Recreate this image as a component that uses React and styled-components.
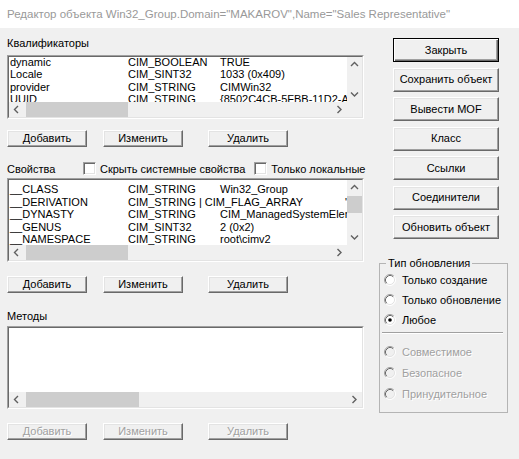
import React from 'react';
import styled, { createGlobalStyle, css } from 'styled-components';

const GlobalStyle = createGlobalStyle`
  html, body { margin: 0; padding: 0; background: #f0f0f0; }
  body { font-family: "Liberation Sans", Arial, sans-serif; font-size: 11px; color: #000; }
`;

const Window = styled.div`
  width: 519px;
  height: 459px;
  background: #f0f0f0;
  overflow: hidden;
  display: flex;
  flex-direction: column;
`;

const TitleBar = styled.div`
  flex: none;
  height: 28px;
  background: #fff;
  color: #999;
  font-size: 11.5px;
  line-height: 28px;
  padding-left: 7px;
  white-space: nowrap;
`;

const Body = styled.div`
  display: flex;
  gap: 15px;
  padding: 9px 0 0 7px;
`;

const LeftColumn = styled.div`
  width: 357px;
  display: flex;
  flex-direction: column;
`;

const SectionLabel = styled.div`
  height: 13px;
  line-height: 13px;
  margin-top: ${p => p.$mt || 0}px;
  white-space: nowrap;
`;

const ListFrame = styled.div`
  box-sizing: border-box;
  height: ${p => p.$h}px;
  margin-top: ${p => p.$mt || 0}px;
  border: 1px solid;
  border-color: #a0a0a0 #fff #fff #a0a0a0;
`;

const ListInner = styled.div`
  box-sizing: border-box;
  height: 100%;
  border: 1px solid;
  border-color: #696969 #e3e3e3 #e3e3e3 #696969;
  background: #fff;
  display: grid;
  grid-template-columns: ${p => (p.$vscroll ? '1fr 15px' : '1fr')};
  grid-template-rows: 1fr 15px;
`;

const ListContent = styled.div`
  overflow: hidden;
  min-width: 0;
  min-height: 0;
  padding-left: 1px;
`;

const Rows = styled.div`
  margin-top: ${p => p.$offset || 0}px;
`;

const ItemRow = styled.div`
  display: grid;
  grid-template-columns: 118px 92px auto;
  height: 12.5px;
  line-height: 12.5px;
  white-space: nowrap;
`;

const Cell = styled.span`
  overflow: visible;
  padding-left: ${p => p.$indent || 0}px;
`;

const VScroll = styled.div`
  background: #f0f0f0;
  display: flex;
  flex-direction: column;
  min-height: 0;
`;

const HScroll = styled.div`
  background: #f0f0f0;
  display: flex;
  align-items: stretch;
  min-width: 0;
`;

const Corner = styled.div`
  background: #f0f0f0;
`;

const ArrowBox = styled.div`
  flex: none;
  width: 15px;
  height: 15px;
  display: flex;
  align-items: center;
  justify-content: center;
`;

const Spacer = styled.div`
  flex: 1;
`;

const HThumb = styled.div`
  flex: none;
  width: ${p => p.$w}px;
  margin-left: 2px;
  background: #cdcdcd;
`;

const VThumb = styled.div`
  flex: none;
  height: ${p => p.$h}px;
  margin-top: ${p => p.$mt || 0}px;
  background: #cdcdcd;
`;

const ButtonRow = styled.div`
  display: flex;
  height: 17px;
  margin-top: ${p => p.$mt || 0}px;
`;

const raised = css`
  border: 1px solid;
  border-color: #fff #696969 #696969 #fff;
  box-shadow: inset -1px -1px 0 #a0a0a0, inset 1px 1px 0 #e3e3e3;
`;

const PushButton = styled.button`
  box-sizing: border-box;
  flex: none;
  width: ${p => p.$w}px;
  height: ${p => p.$h}px;
  margin: 0 0 0 ${p => p.$ml || 0}px;
  padding: 0;
  font-family: "Liberation Sans", Arial, sans-serif;
  font-size: 11px;
  line-height: 1;
  white-space: nowrap;
  background: #f0f0f0;
  color: ${p => (p.disabled ? '#a0a0a0' : '#000')};
  text-shadow: ${p => (p.disabled ? '1px 1px 0 #fff' : 'none')};
  ${raised}
  ${p =>
    p.$default &&
    css`
      border: 1px solid #000;
      box-shadow: inset 1px 1px 0 #fff, inset -1px -1px 0 #696969, inset -2px -2px 0 #a0a0a0;
    `}
`;

const PropsHeader = styled.div`
  display: flex;
  align-items: center;
  height: 13px;
  margin-top: ${p => p.$mt || 0}px;
  white-space: nowrap;
`;

const HeaderLabel = styled.span`
  width: 76px;
  flex: none;
`;

const CheckLabel = styled.label`
  display: flex;
  align-items: center;
  gap: 4px;
  margin-left: ${p => p.$ml || 0}px;
`;

const CheckBox = styled.span`
  box-sizing: border-box;
  width: 13px;
  height: 13px;
  flex: none;
  background: #fff;
  border: 1px solid;
  border-color: #a0a0a0 #fff #fff #a0a0a0;
  box-shadow: inset 1px 1px 0 #696969, inset -1px -1px 0 #e3e3e3;
`;

const RightColumn = styled.div`
  width: 129px;
  display: flex;
  flex-direction: column;
  padding-top: 1px;
`;

const SideStack = styled.div`
  display: flex;
  flex-direction: column;
  gap: 5.5px;
  padding-left: 14px;
`;

const GroupBox = styled.fieldset`
  box-sizing: border-box;
  width: 129px;
  margin: 17.5px 0 0 0;
  padding: 0 0 8px 0;
  min-width: 0;
  border: 1px solid #b4b4b4;
`;

const GroupLegend = styled.legend`
  margin-left: 6px;
  padding: 0 2px;
  line-height: 13px;
  font-size: 11px;
`;

const RadioRow = styled.div`
  display: flex;
  align-items: center;
  gap: 6px;
  height: ${p => p.$h}px;
  padding-left: 4px;
  white-space: nowrap;
  color: ${p => (p.$disabled ? '#a0a0a0' : '#000')};
  text-shadow: ${p => (p.$disabled ? '1px 1px 0 #fff' : 'none')};
`;

const Separator = styled.div`
  height: 0;
  border-top: 1px solid #a0a0a0;
  border-bottom: 1px solid #fff;
  margin: 2.5px 4px 7px 2px;
`;

const Chevron = ({ dir }) => {
  if (dir === 'up' || dir === 'down') {
    const pts = dir === 'up' ? '1,5 4.5,1.5 8,5' : '1,1.5 4.5,5 8,1.5';
    return (
      <svg width="9" height="7" viewBox="0 0 9 7">
        <polyline points={pts} fill="none" stroke="#606060" strokeWidth="1.4" />
      </svg>
    );
  }
  const pts = dir === 'left' ? '5,1 1.5,4.5 5,8' : '1.5,1 5,4.5 1.5,8';
  return (
    <svg width="7" height="9" viewBox="0 0 7 9">
      <polyline points={pts} fill="none" stroke="#606060" strokeWidth="1.4" />
    </svg>
  );
};

const RadioIcon = ({ checked, disabled }) => (
  <svg width="12" height="12" viewBox="0 0 12 12" style={{ flex: 'none' }}>
    <circle cx="6" cy="6" r="5" fill={disabled ? '#f0f0f0' : '#fff'} />
    <path d="M2.11 9.89 A5.5 5.5 0 0 1 9.89 2.11" fill="none" stroke="#a0a0a0" strokeWidth="1" />
    <path d="M9.89 2.11 A5.5 5.5 0 0 1 2.11 9.89" fill="none" stroke="#ffffff" strokeWidth="1" />
    <path d="M2.82 9.18 A4.5 4.5 0 0 1 9.18 2.82" fill="none" stroke="#696969" strokeWidth="1" />
    <path d="M9.18 2.82 A4.5 4.5 0 0 1 2.82 9.18" fill="none" stroke="#e3e3e3" strokeWidth="1" />
    {checked && <circle cx="6" cy="6" r="1.8" fill="#000" />}
  </svg>
);

const ListBox = ({ h, mt, rows, offset = 0, vscroll, vthumb, hthumb }) => (
  <ListFrame $h={h} $mt={mt}>
    <ListInner $vscroll={!!vscroll}>
      <ListContent>
        <Rows $offset={offset}>
          {rows.map((r, i) => (
            <ItemRow key={i}>
              <Cell>{r[0]}</Cell>
              <Cell>{r[1]}</Cell>
              <Cell $indent={r[3] || 0}>{r[2]}</Cell>
            </ItemRow>
          ))}
        </Rows>
      </ListContent>
      {vscroll && (
        <VScroll>
          <ArrowBox><Chevron dir="up" /></ArrowBox>
          {vthumb && <VThumb $h={vthumb.h} $mt={vthumb.mt} />}
          <Spacer />
          <ArrowBox><Chevron dir="down" /></ArrowBox>
        </VScroll>
      )}
      <HScroll>
        <ArrowBox><Chevron dir="left" /></ArrowBox>
        <HThumb $w={hthumb} />
        <Spacer />
        <ArrowBox><Chevron dir="right" /></ArrowBox>
      </HScroll>
      {vscroll && <Corner />}
    </ListInner>
  </ListFrame>
);

const ActionRow = ({ mt, disabled }) => (
  <ButtonRow $mt={mt}>
    <PushButton $w={80} $h={17} disabled={disabled}>Добавить</PushButton>
    <PushButton $w={80} $h={17} $ml={16} disabled={disabled}>Изменить</PushButton>
    <PushButton $w={80} $h={17} $ml={25} disabled={disabled}>Удалить</PushButton>
  </ButtonRow>
);

const qualifiers = [
  ['dynamic', 'CIM_BOOLEAN', 'TRUE'],
  ['Locale', 'CIM_SINT32', '1033 (0x409)'],
  ['provider', 'CIM_STRING', 'CIMWin32'],
  ['UUID', 'CIM_STRING', '{8502C4CB-5FBB-11D2-AAC1-006008C78BC7}'],
];

const properties = [
  ['__CLASS', 'CIM_STRING', 'Win32_Group'],
  ['__DERIVATION', 'CIM_STRING | CIM_FLAG_ARRAY', '"', 125],
  ['__DYNASTY', 'CIM_STRING', 'CIM_ManagedSystemElement'],
  ['__GENUS', 'CIM_SINT32', '2 (0x2)'],
  ['__NAMESPACE', 'CIM_STRING', 'root\\cimv2'],
  ['__PATH', 'CIM_STRING', '\\\\MAKAROV\\root\\cimv2:Win32_Group'],
  ['__PROPERTY_COUNT', 'CIM_SINT32', '9 (0x9)'],
];

const sideButtons = [
  'Сохранить объект',
  'Вывести MOF',
  'Класс',
  'Ссылки',
  'Соединители',
  'Обновить объект',
];

export default function App() {
  return (
    <Window>
      <GlobalStyle />
      <TitleBar>Редактор объекта Win32_Group.Domain="MAKAROV",Name="Sales Representative"</TitleBar>
      <Body>
        <LeftColumn>
          <SectionLabel>Квалификаторы</SectionLabel>
          <ListBox h={64} mt={5} rows={qualifiers} offset={-1.5} vscroll hthumb={102} />
          <ActionRow mt={11} />

          <PropsHeader $mt={15}>
            <HeaderLabel>Свойства</HeaderLabel>
            <CheckLabel>
              <CheckBox />
              Скрыть системные свойства
            </CheckLabel>
            <CheckLabel $ml={9}>
              <CheckBox />
              Только локальные
            </CheckLabel>
          </PropsHeader>
          <ListBox
            h={84}
            mt={3}
            rows={properties}
            offset={3}
            vscroll
            vthumb={{ h: 17, mt: 1 }}
            hthumb={102}
          />
          <ActionRow mt={14} />

          <SectionLabel $mt={17}>Методы</SectionLabel>
          <ListBox h={83} mt={3} rows={[]} hthumb={113} />
          <ActionRow mt={14} disabled />
        </LeftColumn>

        <RightColumn>
          <SideStack>
            <PushButton $w={106} $h={24} $default>Закрыть</PushButton>
            {sideButtons.map(label => (
              <PushButton key={label} $w={106} $h={24}>{label}</PushButton>
            ))}
          </SideStack>
          <GroupBox>
            <GroupLegend>Тип обновления</GroupLegend>
            <RadioRow $h={20}><RadioIcon />Только создание</RadioRow>
            <RadioRow $h={20}><RadioIcon />Только обновление</RadioRow>
            <RadioRow $h={20}><RadioIcon checked />Любое</RadioRow>
            <Separator />
            <RadioRow $h={21} $disabled><RadioIcon disabled />Совместимое</RadioRow>
            <RadioRow $h={21} $disabled><RadioIcon disabled />Безопасное</RadioRow>
            <RadioRow $h={21} $disabled><RadioIcon disabled />Принудительное</RadioRow>
          </GroupBox>
        </RightColumn>
      </Body>
    </Window>
  );
}
